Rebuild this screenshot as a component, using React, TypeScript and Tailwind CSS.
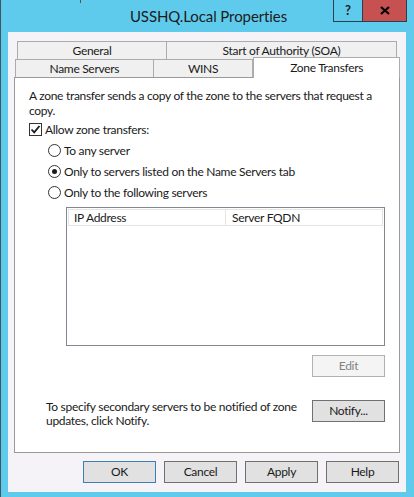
const tabBorder = "border-[#acacac]";

const Checkbox = ({ checked }: { checked: boolean }) => (
  <span className="w-[13px] h-[13px] border border-[#333] bg-white flex items-center justify-center shrink-0">
    {checked && (
      <svg width="11" height="11" viewBox="0 0 11 11">
        <path d="M1.5 5.5 L4.2 8.3 L9.5 2" fill="none" stroke="#1a1a1a" strokeWidth="1.8" />
      </svg>
    )}
  </span>
);

const Radio = ({ checked }: { checked: boolean }) => (
  <span className="w-[13px] h-[13px] rounded-full border border-[#333] bg-white flex items-center justify-center shrink-0">
    {checked && <span className="w-[5px] h-[5px] rounded-full bg-[#1a1a1a]" />}
  </span>
);

const Button = ({
  label,
  isDefault,
  disabled,
}: {
  label: string;
  isDefault?: boolean;
  disabled?: boolean;
}) => (
  <button
    className={
      disabled
        ? "w-[73px] h-[22px] border border-[#adb2b5] bg-[#f4f4f4] text-[#838383] text-[12px] leading-none"
        : isDefault
        ? "w-[73px] h-[22px] border border-[#3c7fb1] bg-[#e1e1e1] text-[#1a1a1a] text-[12px] leading-none"
        : "w-[73px] h-[22px] border border-[#707070] bg-[#e1e1e1] text-[#1a1a1a] text-[12px] leading-none"
    }
  >
    {label}
  </button>
);

const App = () => {
  const radios = [
    { label: "To any server", checked: false },
    { label: "Only to servers listed on the Name Servers tab", checked: true },
    { label: "Only to the following servers", checked: false },
  ];

  return (
    <div className="w-[414px] h-[497px] bg-[#5fcbec] border-l border-[#3f5560] flex flex-col font-['Lato',sans-serif] text-[#1a1a1a] overflow-hidden">
      {/* title bar */}
      <div className="relative h-[32px] flex items-center justify-center">
        <span className="text-[15px] tracking-[-0.1px] text-[#1c1c1c] pl-[2px] pt-[1px]">USSHQ.Local Properties</span>
        <span className="absolute top-0 left-[79px] w-px h-[3px] bg-[#555]" />
        <div className="absolute top-0 right-[7px] flex">
          <span className="w-[29px] h-[22px] border-l border-b border-[#2f3f4c] flex items-center justify-center text-[13px] font-bold leading-none">
            ?
          </span>
          <span className="w-[45px] h-[22px] border-l border-r border-b border-[#2f3f4c] bg-[#c75050] flex items-center justify-center">
            <svg width="10" height="9" viewBox="0 0 10 9">
              <path d="M1 1 L9 8 M9 1 L1 8" stroke="#000" strokeWidth="2.2" />
            </svg>
          </span>
        </div>
      </div>

      {/* client area */}
      <div className="ml-[7px] w-[398px] h-[460px] bg-[#f5f3f8] px-[6px] pt-[9px] text-[12px] tracking-[-0.3px] whitespace-nowrap">
        {/* back tab row */}
        <div className="flex h-[18px] pl-[3px]">
          <div className={`w-[150px] border-t border-l border-r ${tabBorder} bg-[#f0f0f0] flex items-center justify-center`}>
            General
          </div>
          <div className={`w-[230px] border-t border-r ${tabBorder} bg-[#f0f0f0] flex items-center justify-center`}>
            Start of Authority (SOA)
          </div>
        </div>
        {/* front tab row */}
        <div className="flex h-[18px] pl-[1px]">
          <div className={`w-[139px] h-[18px] border-t border-l border-r ${tabBorder} bg-[#f0f0f0] flex items-center justify-center`}>
            Name Servers
          </div>
          <div className={`w-[100px] h-[18px] border-t border-r ${tabBorder} bg-[#f0f0f0] flex items-center justify-center`}>
            WINS
          </div>
          <div className={`relative z-10 -mt-[2px] w-[147px] h-[21px] border-t border-l border-r ${tabBorder} bg-white flex items-start justify-center pt-[1px]`}>
            Zone Transfers
          </div>
        </div>

        {/* tab panel */}
        <div className="h-[376px] border border-[#9a9a9a] bg-white px-[14px] pt-[10px] flex flex-col">
          <p className="leading-[15px]">
            A zone transfer sends a copy of the zone to the servers that request a
            <br />
            copy.
          </p>

          <div className="mt-[1px] h-[21px] flex items-center gap-[3px]">
            <Checkbox checked />
            <span>Allow zone transfers:</span>
          </div>

          {radios.map(({ label, checked }) => (
            <div key={label} className="h-[21px] ml-[19px] flex items-center gap-[3px]">
              <Radio checked={checked} />
              <span>{label}</span>
            </div>
          ))}

          {/* server list */}
          <div className="mt-[4px] ml-[37px] h-[139px] border border-[#828790] p-px">
            <div className="h-[17px] flex border border-[#e5e5e5]">
              <div className="w-[157px] border-r border-[#e5e5e5] pl-[5px] flex items-center">IP Address</div>
              <div className="flex-1 pl-[6px] flex items-center">Server FQDN</div>
            </div>
          </div>

          <div className="mt-[9px] flex justify-end">
            <Button label="Edit" disabled />
          </div>

          <div className="mt-[23px] flex justify-between items-start">
            <p className="ml-[17px] leading-[14px]">
              To specify secondary servers to be notified of zone
              <br />
              updates, click Notify.
            </p>
            <Button label="Notify..." />
          </div>
        </div>

        {/* dialog buttons */}
        <div className="mt-[8px] mr-[1px] flex justify-end gap-[8px]">
          <Button label="OK" isDefault />
          <Button label="Cancel" />
          <Button label="Apply" />
          <Button label="Help" />
        </div>
      </div>
    </div>
  );
};

export default App;
